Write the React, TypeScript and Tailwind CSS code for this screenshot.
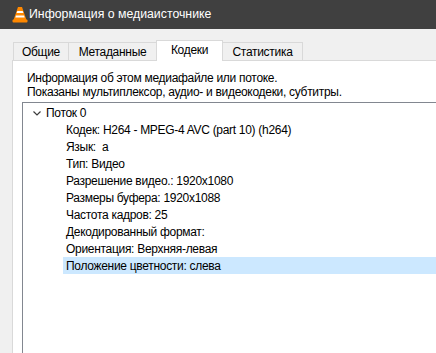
import React from 'react';

const tabs = ['Общие', 'Метаданные', 'Кодеки', 'Статистика'];
const tabWidths = ['w-[56px]', 'w-[89px]', 'w-[67px]', 'w-[81px]'];

const rows = [
  'Кодек: H264 - MPEG-4 AVC (part 10) (h264)',
  'Язык:  a',
  'Тип: Видео',
  'Разрешение видео.: 1920x1080',
  'Размеры буфера: 1920x1088',
  'Частота кадров: 25',
  'Декодированный формат:',
  'Ориентация: Верхняя-левая',
  'Положение цветности: слева',
];

const VlcCone: React.FC = () => (
  <svg width="16" height="17" viewBox="0 0 16 17">
    <path d="M6 1 H10 L14.5 14 H1.5 Z" fill="#ff8800" />
    <path d="M5.3 5 H10.7 L11.4 7 H4.6 Z" fill="#ffffff" />
    <path d="M4 9.5 H12 L12.7 11.5 H3.3 Z" fill="#ffffff" />
    <rect x="0.5" y="13.5" width="15" height="3" rx="1" fill="#ff8800" />
  </svg>
);

const App: React.FC = () => {
  return (
    <div className="w-[436px] h-[353px] overflow-hidden bg-[#f0f0f0] text-[12px] text-black [font-family:'Liberation_Sans',Arial,sans-serif]">
      {/* Title bar */}
      <div className="h-[29px] bg-[#404040] flex items-center pl-[12px]">
        <VlcCone />
        <span className="text-white text-[12.3px] leading-none ml-[1px]">Информация о медиаисточнике</span>
      </div>

      <div className="pl-[12px] pt-[11px] tracking-[-0.3px]">
        {/* Tabs */}
        <div className="flex items-end h-[20px] pl-[1px] relative z-10">
          {tabs.map((t, i) => {
            const selected = i === 2;
            return (
              <div
                key={t}
                className={
                  selected
                    ? `${tabWidths[i]} h-[21px] -mb-[1px] -ml-[1px] bg-white border border-[#d9d9d9] border-b-0 flex items-center justify-center pb-[3px]`
                    : `${tabWidths[i]} h-[18px] bg-[#f0f0f0] border border-[#d9d9d9] border-b-0 flex items-center justify-center ${i > 0 ? '-ml-[1px]' : ''}`
                }
              >
                {t}
              </div>
            );
          })}
        </div>

        {/* Panel */}
        <div className="w-[440px] h-[300px] bg-white border-t border-l border-[#d9d9d9] pt-[10px] pl-[14px]">
          <p className="leading-[14px]">Информация об этом медиафайле или потоке.</p>
          <p className="leading-[14px]">Показаны мультиплексор, аудио- и видеокодеки, субтитры.</p>

          <div className="mt-[3px] -ml-[5px] h-[260px] border-t border-l border-[#828790] pt-[1px]">
            <div className="h-[17px] flex items-center">
              <svg width="10" height="8" viewBox="0 0 10 8" className="ml-[9px]">
                <path d="M1.5 2.5 L5 6 L8.5 2.5" fill="none" stroke="#3c3c3c" strokeWidth="1.2" />
              </svg>
              <span className="ml-[4px]">Поток 0</span>
            </div>
            {rows.map((r, i) => (
              <div
                key={r}
                className={`h-[17px] flex items-center ml-[40px] pl-[3px] whitespace-pre ${i === rows.length - 1 ? 'bg-[#cce8ff]' : ''}`}
              >
                {r}
              </div>
            ))}
          </div>
        </div>
      </div>
    </div>
  );
};

export default App;
